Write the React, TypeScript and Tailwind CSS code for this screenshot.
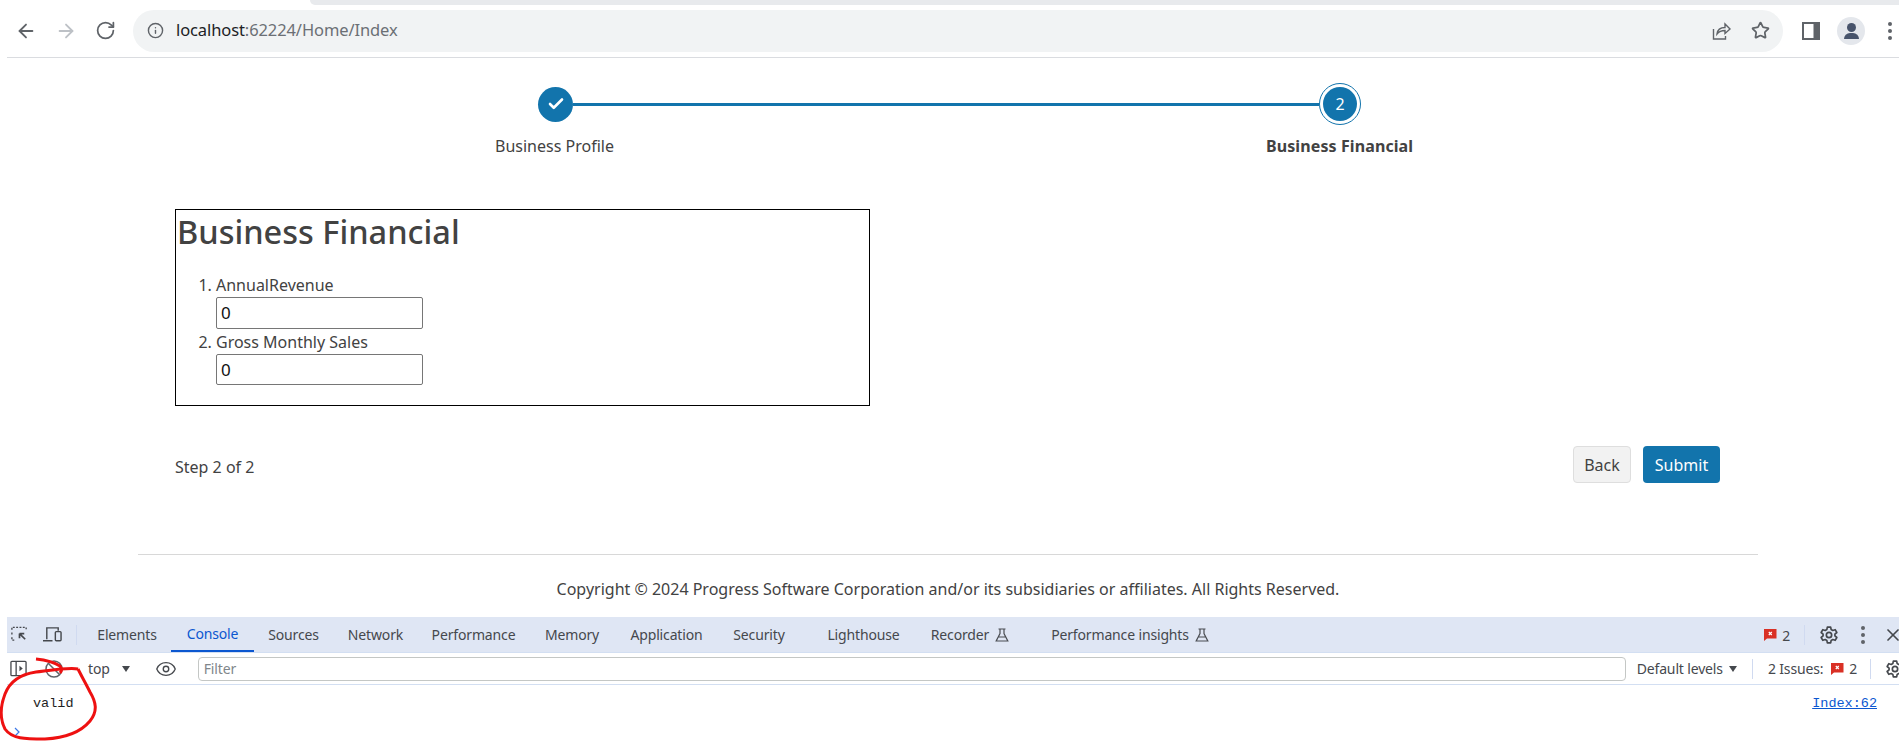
import { ArrowLeft, ArrowRight, Check, Eye, Info, RotateCw, Star, X } from 'lucide-react'

const font = "[font-family:'Noto_Sans',sans-serif]"

function Gear({ className }: { className: string }) {
  return (
    <svg viewBox="0 0 24 24" className={className} fill="none" stroke="currentColor" strokeWidth="2">
      <circle cx="12" cy="12" r="3.2" />
      <path d="M10 2.5h4l.6 3 1.9 1.1 2.9-1 2 3.4-2.3 2v2l2.3 2-2 3.4-2.9-1-1.9 1.1-.6 3h-4l-.6-3-1.9-1.1-2.9 1-2-3.4 2.3-2v-2l-2.3-2 2-3.4 2.9 1 1.9-1.1z" strokeLinejoin="round" />
    </svg>
  )
}

function Flask() {
  return (
    <svg viewBox="0 0 14 14" className="ml-[6px] w-[14px] h-[14px] text-[#4a4d52]" fill="none" stroke="currentColor" strokeWidth="1.2">
      <path d="M3.5 1h7M5 1v4.5L1.2 13h11.6L9 5.500V1M3.300 9h7.400" />
    </svg>
  )
}

function ErrorBadge() {
  return (
    <svg viewBox="0 0 13 13" className="w-[13px] h-[13px]">
      <path d="M0 1h12.500v9.500H3L0 13z" fill="#d93025" />
      <path d="M4.800 4l3 3M7.800 4l-3 3" stroke="white" strokeWidth="1.200" />
    </svg>
  )
}

function Dots({ className }: { className: string }) {
  return (
    <div className={`flex flex-col items-center gap-[3px] ${className}`}>
      <span className="w-[4px] h-[4px] rounded-full bg-[#5f6368]" />
      <span className="w-[4px] h-[4px] rounded-full bg-[#5f6368]" />
      <span className="w-[4px] h-[4px] rounded-full bg-[#5f6368]" />
    </div>
  )
}

function BrowserBar() {
  return (
    <>
      <div className="h-[5px] pl-[310px] bg-white">
        <div className="h-full bg-[#e8eaed] rounded-bl-[8px]" />
      </div>
      <div className="ml-[7px] h-[53px] pb-[1px] border-b border-[#dadce0] flex items-center">
        <ArrowLeft className="ml-[8px] w-[22px] h-[22px] text-[#5f6368]" />
        <ArrowRight className="ml-[18px] w-[22px] h-[22px] text-[#bdc1c6]" />
        <RotateCw className="ml-[18px] w-[21px] h-[21px] text-[#5f6368]" />
        <div className="ml-[17px] w-[1650px] h-[42px] shrink-0 rounded-full bg-[#f1f3f4] flex items-center">
          <Info className="ml-[14px] w-[17px] h-[17px] text-[#5f6368]" />
          <div className={`ml-[12px] text-[16.500px] tracking-[-0.1px] text-[#6b6f75] ${font}`}>
            <span className="text-[#202124]">localhost</span>:62224/Home/Index
          </div>
          <svg viewBox="0 0 20 20" className="ml-auto w-[20px] h-[20px] text-[#5f6368]" fill="none" stroke="currentColor" strokeWidth="1.400">
            <path d="M2.500 8v10h12v-3M6 13c.5-4 3.500-6.500 8-6.500V3l5 5-5 4.500V9.500c-3.500 0-6 1-8 3.500z" />
          </svg>
          <Star className="ml-[20px] mr-[13px] w-[19px] h-[19px] text-[#5f6368]" strokeWidth={2.200} />
        </div>
        <svg viewBox="0 0 18 18" className="ml-[19px] w-[18px] h-[18px] shrink-0">
          <path d="M0 0h18v18H0z" fill="#5f6368" />
          <path d="M2 2h9.500v14H2z" fill="white" />
        </svg>
        <div className="ml-[17px] w-[28px] h-[28px] shrink-0 rounded-full bg-[#e4e7ec] flex flex-col items-center justify-center">
          <span className="w-[9px] h-[9px] rounded-full bg-[#47536b]" />
          <span className="mt-[1px] w-[15px] h-[6px] rounded-t-[6px] bg-[#47536b]" />
        </div>
        <Dots className="ml-[23px]" />
      </div>
    </>
  )
}

function Stepper() {
  return (
    <div className="pt-[25px] h-[151px]">
      <div className="flex items-center pl-[535px] h-[42px]">
        <div className="w-[35px] h-[35px] ml-[3px] rounded-full bg-[#1274ac] flex items-center justify-center">
          <Check className="w-[18px] h-[18px] text-white" strokeWidth={3.500} />
        </div>
        <div className="w-[746px] h-[3px] bg-[#1274ac]" />
        <div className="w-[42px] h-[42px] rounded-full border border-[#1274ac] p-[3px]">
          <div className={`w-full h-full rounded-full bg-[#1274ac] text-white text-[16px] flex items-center justify-center ${font}`}>2</div>
        </div>
      </div>
      <div className={`flex mt-[8px] text-[16px] text-[#424242] leading-[26px] ${font}`}>
        <div className="ml-[495px] w-[771px]">Business Profile</div>
        <div className="font-bold tracking-[0.1px]">Business Financial</div>
      </div>
    </div>
  )
}

function FormBox() {
  return (
    <div className={`ml-[175px] w-[695px] h-[197px] border border-black text-[#424242] ${font}`}>
      <h2 className="ml-[1px] mt-[1px] text-[32.500px] leading-[42px] font-medium">Business Financial</h2>
      <ol className="mt-[20px] pl-[40px] list-decimal text-[16px] leading-[24px]">
        <li>
          AnnualRevenue
          <div className="w-[207px] h-[32px] border border-[#767676] rounded-[2px] text-[#111] px-[4px] leading-[30px] text-[17px]">0</div>
        </li>
        <li className="mt-[1px]">
          Gross Monthly Sales
          <div className="w-[207px] h-[31px] border border-[#767676] rounded-[2px] text-[#111] px-[4px] leading-[29px] text-[17px]">0</div>
        </li>
      </ol>
    </div>
  )
}

function Actions() {
  return (
    <div className={`mt-[40px] ml-[175px] w-[1545px] flex items-center text-[16px] ${font}`}>
      <div className="mt-[4px] text-[#424242]">Step 2 of 2</div>
      <div className="ml-auto w-[58px] h-[37px] rounded-[4px] border border-[#dedede] bg-[#f2f2f2] text-[#424242] flex items-center justify-center">Back</div>
      <div className="ml-[12px] w-[77px] h-[37px] rounded-[4px] bg-[#1274ac] text-white flex items-center justify-center">Submit</div>
    </div>
  )
}

const tabs = [
  { label: 'Elements', width: 'w-[88px]' },
  { label: 'Console', width: 'w-[83px]', active: true },
  { label: 'Sources', width: 'w-[79px]' },
  { label: 'Network', width: 'w-[85px]' },
  { label: 'Performance', width: 'w-[111px]' },
  { label: 'Memory', width: 'w-[86px]' },
  { label: 'Application', width: 'w-[103px]' },
  { label: 'Security', width: 'w-[82px]' },
  { label: 'Lighthouse', width: 'w-[109px] pl-[18px]' },
  { label: 'Recorder', width: 'w-[133px] pr-[11px]', flask: true },
  { label: 'Performance insights', width: 'w-[176px]', flask: true },
]

function DevTools() {
  return (
    <div className={`relative ml-[7px] flex-1 bg-white ${font}`}>
      <div className="h-[35px] bg-[#dfe6f4] flex items-center text-[14px] tracking-[-0.15px] text-[#45484d]">
        <svg viewBox="0 0 20 20" className="ml-[3px] w-[19px] h-[19px] text-[#45484d]" fill="none" stroke="currentColor">
          <path d="M2 5V2.500h15V5M2 8v2M2 13v3h3" strokeWidth="1.400" strokeDasharray="2 1.500" />
          <path d="M10 9l6 6M10 9h5M10 9v5" strokeWidth="1.800" />
        </svg>
        <svg viewBox="0 0 22 20" className="ml-[13px] w-[21px] h-[19px] text-[#45484d]" fill="none" stroke="currentColor" strokeWidth="1.500">
          <path d="M5 15V3h12v3M1 16.500h10" />
          <rect x="14" y="7" width="6" height="9.500" rx="1" />
        </svg>
        <div className="ml-[13px] mr-[6px] w-px h-[20px] bg-[#d0daf0]" />
        {tabs.map((tab) => (
          <div
            key={tab.label}
            className={`${tab.width} h-full flex items-center justify-center ${tab.active ? 'border-b-2 border-[#0b57d0] text-[#0b57d0]' : ''}`}
          >
            {tab.label}
            {tab.flask && <Flask />}
          </div>
        ))}
        <div className="ml-auto"><ErrorBadge /></div>
        <span className="ml-[5px] mt-[2px] text-[14px]">2</span>
        <div className="ml-[14px] w-px h-[20px] bg-[#d0daf0]" />
        <Gear className="ml-[14px] w-[20px] h-[20px] text-[#45484d]" />
        <Dots className="ml-[22px]" />
        <X className="ml-[18px] -mr-[4px] w-[20px] h-[20px] shrink-0 text-[#45484d]" />
      </div>
      <div className="h-[33px] border-b border-t border-[#d3dff2] flex items-center text-[14px] tracking-[-0.15px] text-[#45484d]">
        <svg viewBox="0 0 18 18" className="ml-[3px] w-[17px] h-[17px] shrink-0" fill="none" stroke="#45484d" strokeWidth="1.400">
          <rect x="1" y="1.500" width="16" height="15" rx="1" />
          <path d="M6.500 1.500v15" />
          <path d="M10 6v6l3.500-3z" fill="#45484d" stroke="none" />
        </svg>
        <svg viewBox="0 0 18 18" className="ml-[18px] w-[18px] h-[18px] shrink-0" fill="none" stroke="#5f6368" strokeWidth="1.500">
          <circle cx="9" cy="9" r="8" />
          <path d="M3.500 3.500l11 11" />
        </svg>
        <div className="ml-[13px] w-px h-[20px] bg-[#d0daf0]" />
        <span className="ml-[12px]">top</span>
        <span className="ml-[12px] w-0 h-0 border-x-[4.500px] border-x-transparent border-t-[6px] border-t-[#45484d]" />
        <div className="ml-[13px] w-px h-[20px] bg-[#d0daf0]" />
        <Eye className="ml-[12px] w-[22px] h-[22px] shrink-0 text-[#45484d]" strokeWidth={1.500} />
        <div className="ml-[12px] w-[2px] h-[20px] bg-[#d0daf0]" />
        <div className="ml-[9px] w-[1428px] h-[24px] shrink-0 border border-[#c4c7c5] rounded-[4px] px-[5px] text-[#80868b] leading-[22px]">Filter</div>
        <span className="ml-[11px] whitespace-nowrap">Default levels</span>
        <span className="ml-[6px] w-0 h-0 border-x-[4.500px] border-x-transparent border-t-[6px] border-t-[#45484d]" />
        <div className="ml-[15px] w-px h-[20px] bg-[#d0daf0] shrink-0" />
        <span className="ml-[15px] whitespace-nowrap">2 Issues:</span>
        <div className="ml-[8px] shrink-0"><ErrorBadge /></div>
        <span className="ml-[5px]">2</span>
        <div className="ml-[13px] w-px h-[20px] bg-[#d0daf0] shrink-0" />
        <Gear className="ml-[14px] w-[20px] h-[20px] shrink-0 text-[#45484d]" />
      </div>
      <div className="h-[24px] flex items-center pl-[26px] pr-[22px] mt-[7px] [font-family:'Liberation_Mono',monospace] text-[13.500px]">
        <span className="text-[#1f1f1f]">valid</span>
        <span className="ml-auto text-[#0b57d0] underline">Index:62</span>
      </div>
      <svg viewBox="0 0 10 10" className="ml-[6px] mt-[11px] w-[10px] h-[10px]" fill="none" stroke="#3b78e7" strokeWidth="1.200">
        <path d="M2 1l4 4-4 4" />
      </svg>
      <svg viewBox="0 0 100 100" className="absolute left-[-7px] top-[40px] w-[100px] h-[100px] overflow-visible" fill="none" stroke="#ee1111" strokeWidth="3">
        <path d="M78 12C70 10 52 13 36 15C22 17 10 24 5 37C0 50 0 62 5 72C12 82 25 82 45 82C65 81 80 76 90 64C98 54 96 45 90 35C86 27 82 20 78 12" />
        <path d="M36 2C46 3 54 5 60 9C62 12 62 14 60 16" />
      </svg>
    </div>
  )
}

export default function App() {
  return (
    <div className="w-[1899px] h-[755px] overflow-hidden bg-white flex flex-col">
      <BrowserBar />
      <Stepper />
      <FormBox />
      <Actions />
      <div className={`mt-[71px] ml-[138px] w-[1620px] h-[63px] pt-[5px] border-t border-[#d8d8d8] flex items-center justify-center text-[16px] text-[#424242] ${font}`}>
        Copyright © 2024 Progress Software Corporation and/or its subsidiaries or affiliates. All Rights Reserved.
      </div>
      <DevTools />
    </div>
  )
}
